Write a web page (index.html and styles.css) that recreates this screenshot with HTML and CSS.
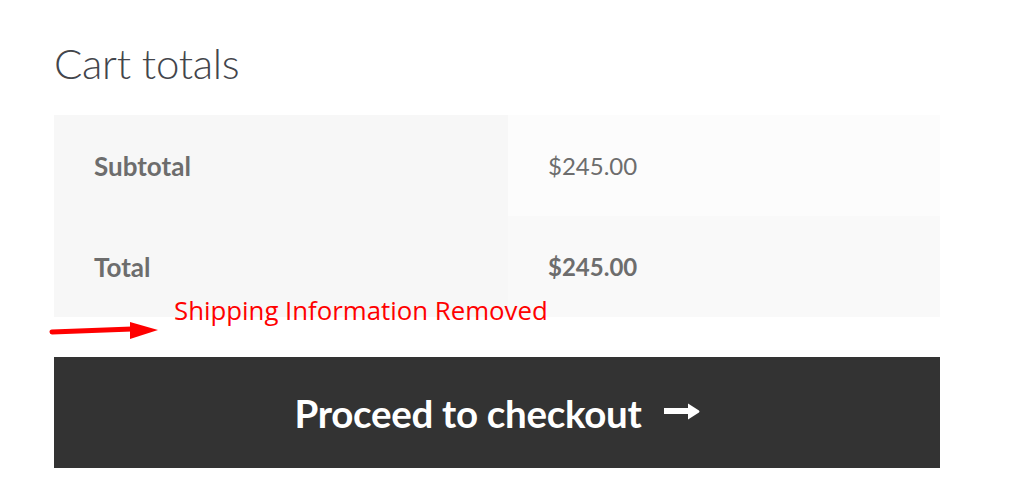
FILE: index.html
```html
<!DOCTYPE html>
<html>
<head>
<meta charset="utf-8">
<link rel="stylesheet" href="styles.css">
</head>
<body>
<div class="page">
  <h2 class="title">Cart totals</h2>
  <div class="totals">
    <div class="row">
      <div class="label">Subtotal</div>
      <div class="value value-light">$245.00</div>
    </div>
    <div class="row">
      <div class="label">Total</div>
      <div class="value value-total"><strong>$245.00</strong></div>
    </div>
    <svg class="note-arrow" width="115" height="24" viewBox="0 0 115 24">
      <path d="M7 14 L87 11" stroke="#ff0000" stroke-width="5" stroke-linecap="round" fill="none"/>
      <polygon points="85,4 113,12 85,21" fill="#ff0000"/>
    </svg>
    <span class="note-text">Shipping Information Removed</span>
  </div>
  <a class="checkout" href="#">Proceed to checkout
    <svg class="arrow" width="36" height="17" viewBox="0 0 36 17">
      <rect x="0" y="5" width="26" height="6" fill="#ffffff"/>
      <path d="M24 0.5 L35 7.5 Q36 8.5 35 9.5 L24 16.5 Z" fill="#ffffff"/>
    </svg>
  </a>
</div>
</body>
</html>
```

FILE: styles.css
```css
html, body {
  margin: 0;
  padding: 0;
  background: #ffffff;
}
.page {
  width: 886px;
  margin-left: 54px;
  padding-top: 37px;
  font-family: "Lato", "Open Sans", sans-serif;
}
.title {
  margin: 0 0 26px 0;
  font-weight: 300;
  font-size: 42px;
  line-height: 52px;
  color: #43454b;
  letter-spacing: -0.3px;
}
.totals {
  position: relative;
  margin-bottom: 40px;
}
.row {
  display: flex;
  height: 101px;
}
.label {
  width: 414px;
  padding-left: 40px;
  background: #f7f7f7;
  display: flex;
  align-items: center;
  font-weight: 700;
  font-size: 26px;
  color: #6d6d6d;
}
.value {
  flex: 1;
  padding-left: 40px;
  display: flex;
  align-items: center;
  font-size: 24px;
  color: #6d6d6d;
}
.value-light { background: #fcfcfc; }
.value-total { background: #f9f9f9; }
.value strong { font-weight: 700; }
.note-arrow {
  position: absolute;
  left: -9px;
  top: 203px;
}
.note-text {
  position: absolute;
  left: 120px;
  top: 180px;
  font-family: "Open Sans", sans-serif;
  font-size: 25.8px;
  line-height: 30px;
  color: #ff0000;
  white-space: nowrap;
}
.checkout {
  display: flex;
  justify-content: center;
  align-items: center;
  height: 111px;
  background: #333333;
  color: #ffffff;
  text-decoration: none;
  font-weight: 700;
  font-size: 38.5px;
  letter-spacing: -0.3px;
}
.arrow {
  margin-left: 22px;
  margin-top: -2px;
}
```
